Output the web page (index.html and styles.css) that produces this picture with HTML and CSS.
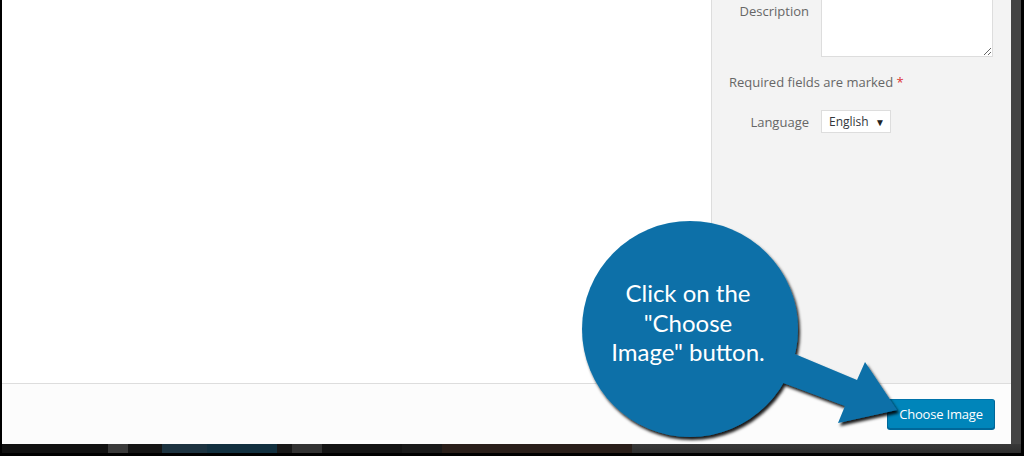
FILE: index.html
```html
<!DOCTYPE html>
<html lang="en">
<head>
  <meta charset="UTF-8" />
  <meta name="viewport" content="width=device-width, initial-scale=1.0" />
  <title>Insert Media</title>
  <link rel="stylesheet" href="styles.css">
</head>
<body>
  <div class="screen">
    <div class="stage">
      <div class="modal">
        <div class="modal-body">
          <div class="content"></div>
          <aside class="sidebar">
            <div class="settings">
              <label class="setting">
                <span class="name">Description</span>
                <textarea class="field"></textarea>
              </label>
              <p class="required">Required fields are marked <span class="star">*</span></p>
              <div class="setting lang">
                <span class="name">Language</span>
                <div class="select"><span>English</span><span class="caret">&#9660;</span></div>
              </div>
            </div>
          </aside>
        </div>
        <div class="toolbar">
          <button type="button" class="button-primary">Choose Image</button>
        </div>
      </div>
      <div class="backdrop-side"></div>
    </div>
    <div class="backdrop-bottom">
      <span class="seg s1"></span><span class="seg s2"></span><span class="seg s3"></span>
      <span class="seg s4"></span><span class="seg s5"></span><span class="seg s6"></span>
      <span class="seg s7"></span><span class="seg s8"></span><span class="seg s9"></span>
      <span class="seg s10"></span><span class="seg s11"></span>
    </div>
  </div>

  <!-- annotation callout drawn over the screenshot -->
  <svg class="callout" width="1024" height="456" viewBox="0 0 1024 456">
    <defs>
      <filter id="shade" x="-20%" y="-20%" width="140%" height="140%">
        <feDropShadow dx="2" dy="3" stdDeviation="1.6" flood-color="#000" flood-opacity="0.9" />
      </filter>
    </defs>
    <g filter="url(#shade)" fill="#0a70a8">
      <circle cx="690" cy="329" r="108" />
      <path d="M778 381 L790 352 L857 380 L865 362 L897 410 L838 423 L845 406 Z" />
    </g>
  </svg>
  <div class="callout-text">Click on the<br>"Choose<br>Image" button.</div>
</body>
</html>
```

FILE: styles.css
```css
body {
  margin: 0;
  background: #000;
  font-family: "Open Sans", "Noto Sans", sans-serif;
  font-size: 13px;
  overflow: hidden;
}
.screen {
  width: 1019px;
  height: 453px;
  margin-left: 2px;
  display: flex;
  flex-direction: column;
  background: #000;
}
.stage { display: flex; height: 444px; }
.modal {
  width: 1009px;
  display: flex;
  flex-direction: column;
  background: #fff;
}
.backdrop-side { flex: 1; background: #444; }
.backdrop-bottom { display: flex; height: 9px; }
.seg { display: block; height: 100%; }
.s1 { width: 106px; background: #111; }
.s2 { width: 20px; background: #3a3a3a; }
.s3 { width: 34px; background: #151515; }
.s4 { width: 45px; background: #1d3340; }
.s5 { width: 70px; background: #12303f; }
.s6 { width: 15px; background: #181818; }
.s7 { width: 30px; background: #333; }
.s8 { width: 80px; background: #141414; }
.s9 { width: 40px; background: #1a1a1a; }
.s10 { width: 190px; background: #2a1f1a; }
.s11 { flex: 1; background: linear-gradient(#393939, #2e2e2e); }

.modal-body { display: flex; height: 383px; }
.content { flex: 1; background: #fff; border-right: 1px solid #ddd; }
.sidebar {
  width: 264px;
  padding: 0 18px 0 17px;
  background: #f3f3f3;
  overflow: hidden;
}
.settings { margin-top: -10px; }
.setting { display: flex; align-items: flex-start; gap: 12px; }
.setting .name {
  width: 80px;
  flex: none;
  text-align: right;
  color: #666;
  line-height: 18px;
  padding-top: 12px;
}
.field {
  width: 173px;
  height: 67px;
  box-sizing: border-box;
  margin: 0;
  border: 1px solid #ddd;
  background: #fff;
  font: inherit;
}
.required {
  margin: 16px 0 0;
  line-height: 18px;
  color: #666;
}
.star { color: #dc3232; }
.lang { margin-top: 19px; align-items: center; }
.lang .name { padding-top: 0; }
.select {
  width: 70px;
  height: 23px;
  box-sizing: border-box;
  border: 1px solid #ddd;
  background: #fff;
  color: #32373c;
  font-size: 12px;
  padding: 0 5px 0 7px;
  display: flex;
  align-items: center;
  justify-content: space-between;
}
.caret { font-size: 10px; color: #222; }

.toolbar {
  height: 60px;
  border-top: 1px solid #ddd;
  background: #fcfcfc;
  display: flex;
  align-items: center;
  justify-content: flex-end;
  padding-right: 16px;
}
.button-primary {
  height: 30px;
  width: 108px;
  border: 1px solid #0073aa;
  border-color: #0073aa #006799 #006799;
  border-radius: 3px;
  box-shadow: 0 1px 0 #006799;
  background: #0085ba;
  color: #fff;
  font: 13px "Open Sans", "Noto Sans", sans-serif;
  letter-spacing: -0.2px;
  padding: 0;
}

.callout {
  position: absolute;
  left: 0;
  top: 0;
  pointer-events: none;
}
.callout-text {
  position: absolute;
  left: 588px;
  top: 278px;
  width: 200px;
  text-align: center;
  color: #fff;
  font-family: Lato, "Open Sans", sans-serif;
  font-size: 24px;
  line-height: 29.5px;
}
```
